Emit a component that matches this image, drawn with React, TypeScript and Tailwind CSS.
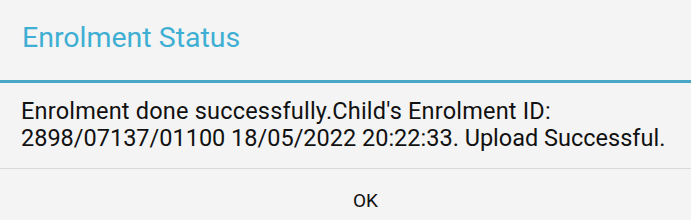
const App = () => {
  return (
    <div
      className="w-[691px] h-[220px] bg-[#f4f4f4] flex flex-col overflow-hidden"
      style={{ fontFamily: "Roboto, 'Noto Sans', sans-serif" }}
    >
      <div className="h-[80px] pl-[22px] pt-[20px]">
        <h1 className="text-[28.5px] leading-[36px] text-[#3eafd3]">Enrolment Status</h1>
      </div>
      <div className="h-[3px] bg-[#4aa6c6]" />
      <div className="pl-[21px] pr-2 pt-[15px] pb-[16px] text-[23.5px] leading-[27px] text-[#111]">
        <p className="tracking-[0.2px]">Enrolment done successfully.Child's Enrolment ID:</p>
        <p>2898/07137/01100 18/05/2022 20:22:33. Upload Successful.</p>
      </div>
      <div className="h-px bg-[#d9d9d9]" />
      <div className="flex justify-center pl-[40px] pt-[21px]">
        <button className="text-[19px] leading-[22px] text-[#111]">OK</button>
      </div>
    </div>
  );
};

export default App;
